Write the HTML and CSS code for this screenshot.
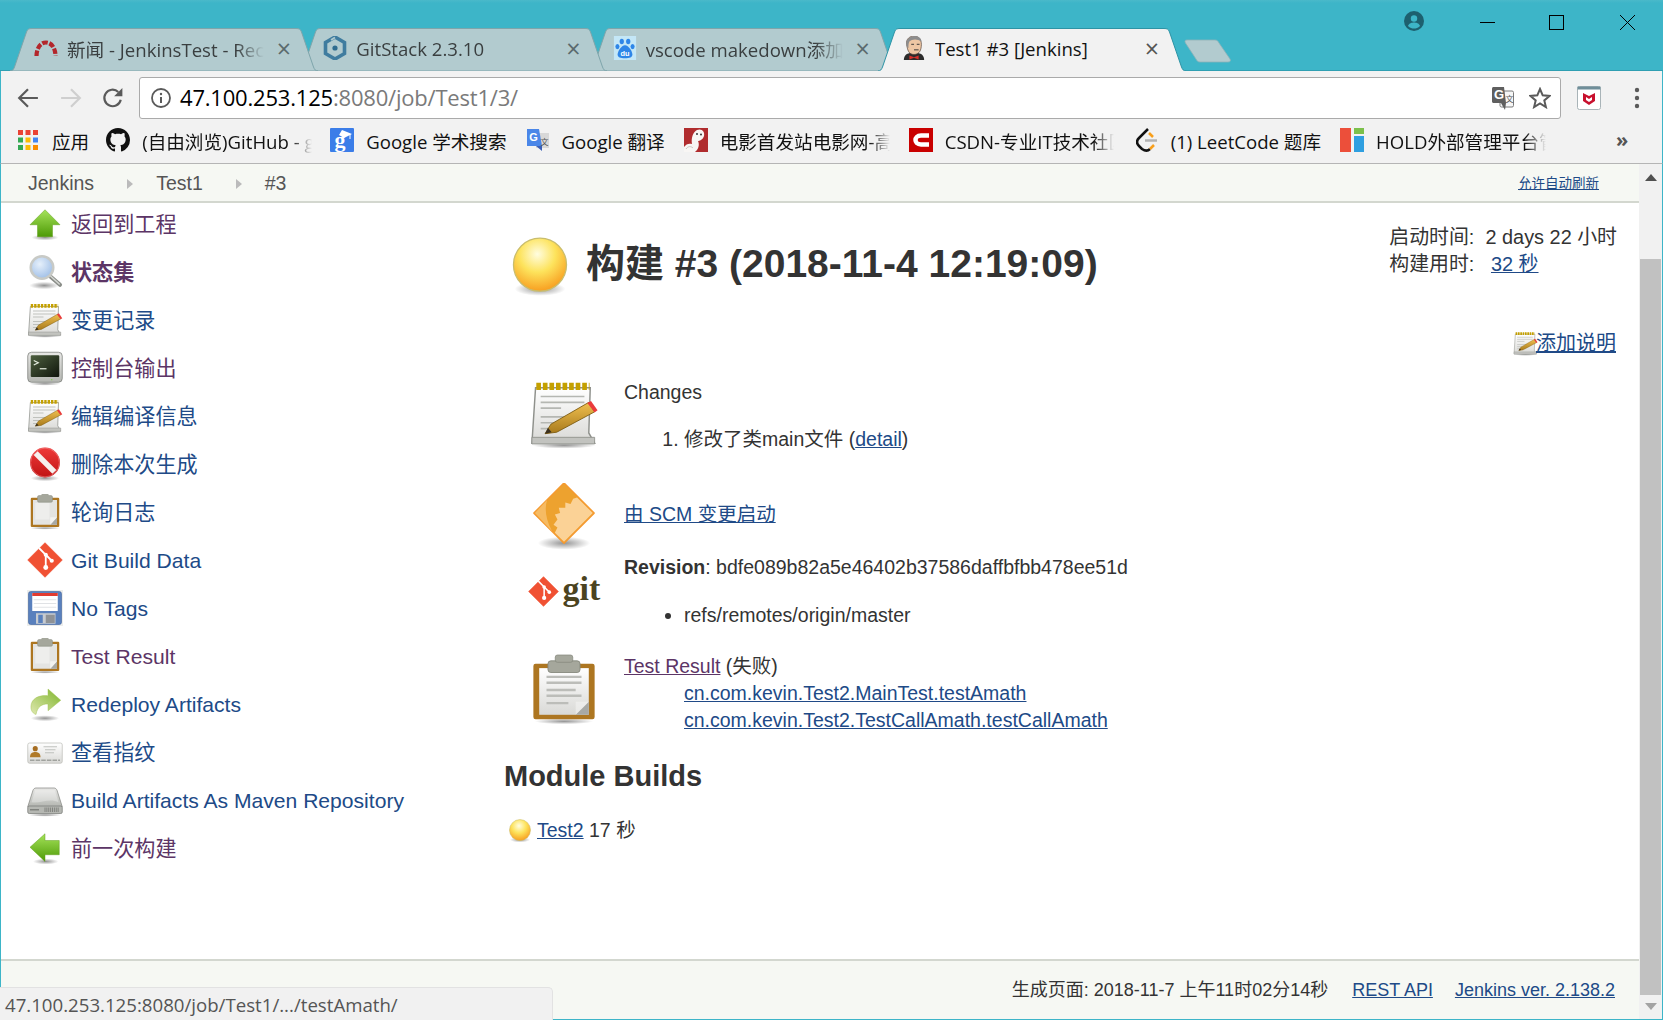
FILE: index.html
```html
<!DOCTYPE html>
<html lang="zh-CN">
<head>
<meta charset="utf-8">
<title>Test1 #3 [Jenkins]</title>
<link rel="stylesheet" href="styles.css">
</head>
<body>
<svg class="defs" width="0" height="0" aria-hidden="true">
<defs>
<linearGradient id="gGreen" x1="0" y1="0" x2="0" y2="1"><stop offset="0" stop-color="#a5e35a"/><stop offset="1" stop-color="#4e9a06"/></linearGradient>
<linearGradient id="gPaper" x1="0" y1="0" x2="0" y2="1"><stop offset="0" stop-color="#fff"/><stop offset="1" stop-color="#d9d9d6"/></linearGradient>
<linearGradient id="gPencil" x1="0" y1="0" x2="0" y2="1"><stop offset="0" stop-color="#f0c050"/><stop offset="1" stop-color="#a87a1c"/></linearGradient>
<linearGradient id="gGray" x1="0" y1="0" x2="0" y2="1"><stop offset="0" stop-color="#e8e8e6"/><stop offset="1" stop-color="#b4b6b1"/></linearGradient>
<linearGradient id="gTerm" x1="0" y1="0" x2="1" y2="1"><stop offset="0" stop-color="#4d5f3f"/><stop offset="1" stop-color="#10160c"/></linearGradient>
<linearGradient id="gRedeploy" x1="0" y1="1" x2="1" y2="0"><stop offset="0" stop-color="#dfe8b0"/><stop offset="1" stop-color="#7fb52c"/></linearGradient>
<radialGradient id="gBall" cx=".45" cy=".3" r=".68"><stop offset="0" stop-color="#fffde0"/><stop offset=".5" stop-color="#fde35c"/><stop offset="1" stop-color="#f8a324"/></radialGradient>
<radialGradient id="gShadow"><stop offset="0" stop-color="#000" stop-opacity=".42"/><stop offset="1" stop-color="#000" stop-opacity="0"/></radialGradient>
<radialGradient id="gLens" cx=".4" cy=".35" r=".7"><stop offset="0" stop-color="#e6f0fb"/><stop offset="1" stop-color="#9dbde6"/></radialGradient>
<linearGradient id="gRed" x1="0" y1="0" x2="0" y2="1"><stop offset="0" stop-color="#ef3a3a"/><stop offset="1" stop-color="#c01414"/></linearGradient>

<symbol id="i-up" viewBox="0 0 48 48"><ellipse cx="24" cy="42" rx="18" ry="4" fill="url(#gShadow)"/><path d="M24 5 44 25H34V41H14V25H4Z" fill="url(#gGreen)" stroke="#5a9a14" stroke-width=".6"/></symbol>
<symbol id="i-left" viewBox="0 0 48 48"><ellipse cx="25" cy="42" rx="17" ry="4" fill="url(#gShadow)"/><path d="M4 23 24 5V14H43V33H24V42Z" fill="url(#gGreen)" stroke="#5a9a14" stroke-width=".6"/></symbol>
<symbol id="i-mag" viewBox="0 0 48 48"><ellipse cx="23" cy="42" rx="20" ry="5" fill="url(#gShadow)"/><path d="M30 29 44 41" stroke="#8a8d88" stroke-width="5.500" stroke-linecap="round"/><path d="M31 29 43 40" stroke="#d4d6d2" stroke-width="2" stroke-linecap="round"/><circle cx="20" cy="18" r="15" fill="url(#gLens)" stroke="#c8cac6" stroke-width="3.400"/></symbol>
<symbol id="i-note" viewBox="0 0 48 48"><ellipse cx="24" cy="45.500" rx="22" ry="2.200" fill="url(#gShadow)"/><path d="M4.500 6H42L41 37 45 44H2Z" fill="url(#gPaper)" stroke="#8f918c" stroke-width="1"/><path d="M2 40H45V44.500H2Z" fill="#c2c3bf" stroke="#8f918c" stroke-width=".6"/><path d="M5 5H41.500" stroke="#c4a000" stroke-width="5" stroke-dasharray="3.200 1.300"/><path d="M8 12H38M8 16H38M8 20H22M8 26H28M8 30H22M8 34H18" stroke="#b5b7b2" stroke-width="1.100"/><path d="M11 37.500 15 31 41 16 45 22.500 19 36.500Z" fill="url(#gPencil)" stroke="#7c5a10" stroke-width=".6"/><path d="M40 16.500 42.500 15 47 21.500 45 23Z" fill="#ea3b3b"/><path d="M11 37.500 13 33.500 15.500 36.500Z" fill="#3a3020"/></symbol>
<symbol id="i-term" viewBox="0 0 48 48"><ellipse cx="24" cy="45" rx="21" ry="2.500" fill="url(#gShadow)"/><rect x="1" y="3" width="46" height="40" rx="5" fill="url(#gGray)" stroke="#7a7c78" stroke-width="1"/><rect x="5" y="7" width="38" height="29" rx="1.500" fill="url(#gTerm)"/><path d="M9 14 15 17 9 20" fill="none" stroke="#e6eee0" stroke-width="1.600"/><path d="M17 25H26" stroke="#e6eee0" stroke-width="1.600"/><circle cx="33" cy="39.500" r=".9" fill="#7ad13d"/></symbol>
<symbol id="i-no" viewBox="0 0 48 48"><ellipse cx="24" cy="43" rx="19" ry="4" fill="url(#gShadow)"/><circle cx="24" cy="22" r="20" fill="url(#gRed)"/><circle cx="24" cy="22" r="19.200" fill="none" stroke="#e88" stroke-width=".8"/><path d="M11.500 9.500 36.500 34.500" stroke="#f6f0ee" stroke-width="7.500"/></symbol>
<symbol id="i-clip" viewBox="0 0 48 48"><ellipse cx="24" cy="45.500" rx="20" ry="2" fill="url(#gShadow)"/><rect x="5" y="5" width="38" height="39" rx="1.500" fill="#ad7621"/><rect x="8" y="8" width="32" height="33" fill="#e4e4e2"/><path d="M11 12H30V34H11Z" fill="#eeeeec"/><path d="M31 41 40 31V41Z" fill="#a8a9a5"/><path d="M31 41V31H40Z" fill="#f3f3f1"/><rect x="14" y="2" width="20" height="9" rx="2" fill="#a5a79c" stroke="#85877c" stroke-width=".6"/><rect x="19" y="0" width="10" height="4" rx="1.500" fill="#a5a79c"/></symbol>
<symbol id="i-clipb" viewBox="0 0 48 48"><ellipse cx="24" cy="45.500" rx="20" ry="2" fill="url(#gShadow)"/><rect x="3" y="6" width="42" height="38" rx="1.500" fill="#ad7621"/><rect x="7" y="9" width="34" height="32" fill="url(#gPaper)"/><path d="M12 15H36M12 19H36M12 24H32M12 28H36M12 33H27" stroke="#bcbdb9" stroke-width="1.700"/><path d="M32 41 41 32V41Z" fill="#a8a9a5"/><path d="M32 41V32H41Z" fill="#f3f3f1" opacity=".6"/><rect x="13" y="4" width="22" height="8" rx="2" fill="#a5a79c" stroke="#85877c" stroke-width=".6"/><rect x="18" y="0" width="12" height="5" rx="1.500" fill="#a5a79c" stroke="#85877c" stroke-width=".5"/></symbol>
<symbol id="i-git" viewBox="0 0 48 48"><path d="M24 1 47 24 24 47 1 24Z" fill="#f05133" stroke="#f05133" stroke-width="1" stroke-linejoin="round"/><path d="M16 8 25 17V33M25 17 33 25" fill="none" stroke="#fff" stroke-width="2.400"/><circle cx="25" cy="17" r="2.800" fill="#fff"/><circle cx="25" cy="34" r="3.300" fill="#fff"/><circle cx="33" cy="25" r="2.800" fill="#fff"/></symbol>
<symbol id="i-floppy" viewBox="0 0 48 48"><rect x="0" y="0" width="48" height="48" fill="#ecedeb"/><rect x="2" y="2" width="44" height="44" rx="3" fill="#5980bd" stroke="#3c5f9b" stroke-width=".8"/><rect x="7" y="4" width="34" height="24" fill="#fff"/><rect x="7" y="4" width="34" height="4" fill="#e23b30"/><path d="M9 13H39M9 18H39M9 23H39" stroke="#d5d8dc" stroke-width="1"/><rect x="12" y="31" width="26" height="14" fill="#c7cbd0"/><rect x="15" y="33" width="6" height="11" fill="#5980bd"/><rect x="25" y="33" width="12" height="11" fill="#8f9296"/></symbol>
<symbol id="i-redeploy" viewBox="0 0 48 48"><ellipse cx="24" cy="43" rx="19" ry="4" fill="url(#gShadow)"/><path d="M28 4 45 19 28 33V24C20 24 14 27 12 38 6 36 4 30 6 23 9 15 18 12 28 13Z" fill="url(#gRedeploy)" stroke="#9fc04e" stroke-width=".6"/></symbol>
<symbol id="i-card" viewBox="0 0 48 48"><rect x="1" y="12" width="46" height="27" rx="2.500" fill="url(#gPaper)" stroke="#bdbfba" stroke-width="1"/><circle cx="11" cy="19.500" r="3.400" fill="#a66e22"/><path d="M4 31C4 25 8 24 11 24S18 25 18 31Z" fill="#b07a28"/><path d="M22 17H40M24 21H38M24 25H36" stroke="#b9bbb7" stroke-width="1.200"/><path d="M4 35H44" stroke="#a0a29e" stroke-width="2.200" stroke-dasharray="6 1.500"/></symbol>
<symbol id="i-disk" viewBox="0 0 48 48"><ellipse cx="24" cy="44" rx="22" ry="2.200" fill="url(#gShadow)"/><path d="M12 8H36C38 8 39 9 40 11L47 33H1L8 11C9 9 10 8 12 8Z" fill="url(#gGray)" stroke="#888a85" stroke-width="1"/><path d="M11 11H37L42 27C30 21 18 29 6 27Z" fill="#fff" opacity=".3"/><rect x="1" y="32" width="46" height="10" rx="2" fill="#b5b7b2" stroke="#7a7c78" stroke-width="1"/><path d="M24 34V40M26.500 34V40M29 34V40M31.500 34V40M34 34V40M36.500 34V40M39 34V40M41.500 34V40" stroke="#70726e" stroke-width="1"/><path d="M4 37H16" stroke="#80827e" stroke-width="2"/></symbol>
<symbol id="i-ball" viewBox="0 0 48 52"><ellipse cx="24" cy="45" rx="22" ry="6" fill="url(#gShadow)"/><circle cx="24" cy="24" r="23" fill="url(#gBall)" stroke="#c9bd6c" stroke-width="1.100"/></symbol>
<symbol id="i-scm" viewBox="0 0 48 52"><ellipse cx="24" cy="46" rx="20" ry="5" fill="url(#gShadow)"/><path d="M24 0 47 23 24 46 1 23Z" fill="#eda22f" stroke="#f59a30" stroke-width="1.200" stroke-linejoin="round"/><path d="M11 13C9 20 10 28 15 37L1.800 23Z" fill="#f6bb63"/><path d="M46 23 24 45 17 38 19 34 16 32 19 28 17 24 21 23 20 19 25 19 25 15 29 16 31 12 34 11Z" fill="#fbd296"/></symbol>
</defs>
</svg>

<div class="window">
  <header class="titlebar">
    <div class="tabs">
      <div class="tab tab-a">
        <svg class="tab-bg" viewBox="0 0 308 43" preserveAspectRatio="none"><path d="M0 43C2.500 43 3.500 41.500 4.500 39L16.500 4C17.500 1 19 .5 22 .5H286C289 .5 290.500 1 291.500 4L303.500 39C304.500 41.500 305.500 43 308 43Z" class="tab-shape"/></svg>
        <svg class="fav" viewBox="0 0 24 16"><path d="M2.500 16C2.500 9 6 2.500 12 2.500S21.500 9 21.500 16" fill="none" stroke="#b3262b" stroke-width="4.200" stroke-dasharray="5.500 1.700"/></svg>
        <span class="tab-title">新闻 - JenkinsTest - Rec</span><span class="tab-x">×</span>
      </div>
      <div class="tab tab-b">
        <svg class="tab-bg" viewBox="0 0 308 43" preserveAspectRatio="none"><path d="M0 43C2.500 43 3.500 41.500 4.500 39L16.500 4C17.500 1 19 .5 22 .5H286C289 .5 290.500 1 291.500 4L303.500 39C304.500 41.500 305.500 43 308 43Z" class="tab-shape"/></svg>
        <svg class="fav" viewBox="0 0 24 24"><path d="M12 1 21.500 6.500V17.500L12 23 2.500 17.500V6.500Z" fill="none" stroke="#3f7c9f" stroke-width="3.600"/><path d="M8 4 12 1.500" stroke="#aec9ce" stroke-width="2"/><circle cx="12" cy="12" r="2.600" fill="#2f6c8f"/></svg>
        <span class="tab-title">GitStack 2.3.10</span><span class="tab-x">×</span>
      </div>
      <div class="tab tab-c">
        <svg class="tab-bg" viewBox="0 0 308 43" preserveAspectRatio="none"><path d="M0 43C2.500 43 3.500 41.500 4.500 39L16.500 4C17.500 1 19 .5 22 .5H286C289 .5 290.500 1 291.500 4L303.500 39C304.500 41.500 305.500 43 308 43Z" class="tab-shape"/></svg>
        <svg class="fav" viewBox="0 0 24 26"><rect width="24" height="26" fill="#c4e7f7"/><g fill="#2e86e8"><ellipse cx="8.500" cy="6" rx="2.300" ry="3"/><ellipse cx="15.500" cy="6" rx="2.300" ry="3"/><ellipse cx="3.800" cy="11.500" rx="2.200" ry="2.800"/><ellipse cx="20.200" cy="11.500" rx="2.200" ry="2.800"/><path d="M12 10C8 10 4 17 4 20S7 24 12 24 20 23 20 20 16 10 12 10Z"/></g><text x="12" y="22" class="du">du</text></svg>
        <span class="tab-title">vscode makedown添加目录</span><span class="tab-x">×</span>
      </div>
      <div class="tab tab-d">
        <svg class="tab-bg" viewBox="0 0 308 43" preserveAspectRatio="none"><path d="M0 43C2.500 43 3.500 41.500 4.500 39L16.500 4C17.500 1 19 .5 22 .5H286C289 .5 290.500 1 291.500 4L303.500 39C304.500 41.500 305.500 43 308 43" class="tab-shape-active"/></svg>
        <svg class="fav" viewBox="0 0 24 26"><path d="M1 26C1 20 6 18 12 18S23 20 23 26Z" fill="#2c2c2c"/><path d="M4 9C3 3 8 0 12 0S20 3 20 9 18 20 12 20 5 15 4 9Z" fill="#eec7a4" stroke="#4a3a30" stroke-width=".7"/><path d="M4 11C2 4 8 0 12 0 18 0 20 3 20 6 16 3 10 3 7 6 6 8 6 10 6 13Z" fill="#8d8d8d"/><path d="M9 9H12M15 9H18M12 15H17" stroke="#333" stroke-width="1"/><path d="M7 21 12 23 17 21V25.500L12 23.500 7 25.500Z" fill="#d9302a"/></svg>
        <span class="tab-title tab-title-active">Test1 #3 [Jenkins]</span><span class="tab-x">×</span>
      </div>
      <svg class="newtab" viewBox="0 0 48 24"><path d="M3 1H31C33 1 34 2 35 4L46 20C47 22 46 23 44 23H16C14 23 13 22 12 20L1.500 4C.5 2 1 1 3 1Z" fill="#b2cbcf" stroke="#8fb3b8" stroke-width=".8"/></svg>
    </div>
    <div class="winctl">
      <svg class="user" viewBox="0 0 20 20"><circle cx="10" cy="10" r="10" fill="#1d606f"/><circle cx="10" cy="7.500" r="3.200" fill="#3db5c8"/><path d="M4 15C5 12 8 11.500 10 11.500S15 12 16 15C14 17 12 17.500 10 17.500S6 17 4 15Z" fill="#3db5c8"/></svg>
      <svg class="wc wc-min" viewBox="0 0 15 15"><path d="M0 7.500H15" stroke="#000" stroke-width="1"/></svg>
      <svg class="wc wc-max" viewBox="0 0 15 15"><rect x=".5" y=".5" width="14" height="14" fill="none" stroke="#000"/></svg>
      <svg class="wc wc-close" viewBox="0 0 15 15"><path d="M0 0 15 15M15 0 0 15" stroke="#000" stroke-width="1"/></svg>
    </div>
  </header>

  <div class="toolbar">
    <svg class="tb tb-back" viewBox="0 0 20 20"><path d="M19 10H3M10 2 2 10 10 18" fill="none" stroke="#5a5a5a" stroke-width="2"/></svg>
    <svg class="tb tb-fwd" viewBox="0 0 20 20"><path d="M1 10H17M10 2 18 10 10 18" fill="none" stroke="#cfcfcf" stroke-width="2"/></svg>
    <svg class="tb tb-reload" viewBox="0 0 20 20"><path d="M17 11.500A7.500 7.500 0 1 1 14.800 4.500" fill="none" stroke="#5a5a5a" stroke-width="2"/><path d="M18.500 1V8.500H11Z" fill="#5a5a5a"/></svg>
    <div class="omnibox">
      <svg class="omni-info" viewBox="0 0 20 20"><circle cx="10" cy="10" r="9" fill="none" stroke="#5a5a5a" stroke-width="1.800"/><path d="M10 9V15" stroke="#5a5a5a" stroke-width="2"/><circle cx="10" cy="6" r="1.200" fill="#5a5a5a"/></svg>
      <span class="url"><b class="url-host">47.100.253.125</b>:8080/job/Test1/3/</span>
      <svg class="omni-tr" viewBox="0 0 22 24"><rect x="8" y="5" width="13.500" height="16" rx="1.500" fill="#f6f6f6" stroke="#7a7a7a"/><path d="M1.500 1H12L14 17H1.500C.7 17 0 16.300 0 15.500V2.500C0 1.700.7 1 1.500 1Z" fill="#5f5f5f"/><path d="M9 17 13 24 14 17Z" fill="#5f5f5f"/><text x="7" y="13" class="tr-g">G</text><text x="17.500" y="16" class="tr-z">文</text></svg>
      <svg class="omni-star" viewBox="0 0 22 22"><path d="M11 2 13.700 8.300 20.500 8.900 15.300 13.400 16.900 20.100 11 16.500 5.100 20.100 6.700 13.400 1.500 8.900 8.300 8.300Z" fill="none" stroke="#5a5a5a" stroke-width="2"/></svg>
    </div>
    <svg class="ext" viewBox="0 0 24 24"><rect x=".5" y=".5" width="23" height="23" rx="2" fill="#fff" stroke="#a9b4b8"/><rect x=".5" y=".5" width="23" height="3" fill="#6f8e99"/><path d="M6 7 12 10 18 7V15L12 19 6 15ZM9 11V14L12 16 15 14V11L12 13Z" fill="#c8102e" fill-rule="evenodd"/></svg>
    <svg class="dots" viewBox="0 0 6 22"><circle cx="3" cy="3" r="2.200" fill="#5a5a5a"/><circle cx="3" cy="11" r="2.200" fill="#5a5a5a"/><circle cx="3" cy="19" r="2.200" fill="#5a5a5a"/></svg>
  </div>

  <nav class="bookmarks">
    <a class="bm bm-apps">
      <svg class="bm-ico bm-grid" viewBox="0 0 20 20"><g fill="#ea4335"><rect width="5" height="5"/><rect x="7.500" width="5" height="5"/><rect x="15" width="5" height="5"/></g><rect y="7.500" width="5" height="5" fill="#34a853"/><rect x="7.500" y="7.500" width="5" height="5" fill="#fbbc05"/><rect x="15" y="7.500" width="5" height="5" fill="#4285f4"/><rect y="15" width="5" height="5" fill="#34a853"/><rect x="7.500" y="15" width="5" height="5" fill="#fbbc05"/><rect x="15" y="15" width="5" height="5" fill="#fb8c00"/></svg>
      <span class="bm-t">应用</span>
    </a>
    <a class="bm bm-gh">
      <svg class="bm-ico" viewBox="0 0 16 16"><path d="M8 0C3.580 0 0 3.580 0 8c0 3.540 2.290 6.530 5.470 7.590.4.070.55-.17.55-.38 0-.19-.01-.82-.01-1.490-2.010.37-2.530-.49-2.690-.94-.09-.23-.48-.94-.82-1.130-.28-.15-.68-.52-.01-.53.63-.01 1.080.58 1.230.82.72 1.210 1.870.87 2.330.66.07-.52.28-.87.51-1.070-1.780-.2-3.640-.89-3.640-3.950 0-.87.31-1.590.82-2.150-.08-.2-.36-1.020.08-2.120 0 0 .67-.21 2.200.82.64-.18 1.320-.27 2-.27.68 0 1.360.09 2 .27 1.530-1.040 2.200-.82 2.200-.82.44 1.100.16 1.920.08 2.120.51.56.82 1.270.82 2.150 0 3.070-1.870 3.750-3.650 3.950.29.25.54.73.54 1.480 0 1.070-.01 1.930-.01 2.200 0 .21.15.46.55.38A8.013 8.013 0 0016 8c0-4.420-3.580-8-8-8z" fill="#111"/></svg>
      <span class="bm-t bm-fade w-gh">(自由浏览)GitHub - g</span>
    </a>
    <a class="bm bm-gs">
      <svg class="bm-ico" viewBox="0 0 24 24"><rect width="24" height="24" rx="1" fill="#3b7de8"/><text x="10" y="19" class="gs-g">g</text><path d="M12 2 22 6 14 10 9 7Z" fill="#fff"/><path d="M20 6V11" stroke="#fff"/></svg>
      <span class="bm-t">Google 学术搜索</span>
    </a>
    <a class="bm bm-gt">
      <svg class="bm-ico" viewBox="0 0 24 24"><rect x="10" y="5" width="13" height="15" fill="#d8d8d8"/><path d="M1 1H13L16 18H1Z" fill="#4a86e8"/><path d="M10 18 16 23 16 18Z" fill="#3a5fb8"/><text x="7.500" y="13" class="gt-g">G</text><text x="18.500" y="17" class="gt-z">文</text></svg>
      <span class="bm-t">Google 翻译</span>
    </a>
    <a class="bm bm-mv">
      <svg class="bm-ico" viewBox="0 0 24 24"><rect width="24" height="24" fill="#b02c2e"/><path d="M0 24V19C2 16 5 15 8 16 7 10 9 4 13 2 18 0 21 4 20 8 19 12 15 13 14 13 16 17 14 22 11 24Z" fill="#f8f6f4"/><path d="M2 21C4 18 7 18 9 20" fill="none" stroke="#c9c4c0"/><circle cx="13" cy="6" r=".9" fill="#222"/><circle cx="17" cy="6.500" r=".9" fill="#222"/></svg>
      <span class="bm-t bm-fade w-mv">电影首发站电影网-高清</span>
    </a>
    <a class="bm bm-cs">
      <svg class="bm-ico" viewBox="0 0 24 24"><rect width="24" height="24" fill="#c90000"/><path d="M20 7.500H12C8 7.500 6.500 10 6.500 12S8 16.500 12 16.500H20" fill="none" stroke="#fff" stroke-width="4.500"/></svg>
      <span class="bm-t bm-fade w-cs">CSDN-专业IT技术社区</span>
    </a>
    <a class="bm bm-lc">
      <svg class="bm-ico bm-lc-ico" viewBox="0 0 22 24"><path d="M12 1 3 10C0 13 1 16 3 18L6 21C9 23 12 23 14 21" fill="none" stroke="#111" stroke-width="2.500"/><path d="M13 5 17 9M14 21 18 17" fill="none" stroke="#f89f1b" stroke-width="2.500"/><path d="M9 12.500H21" stroke="#b3b3b3" stroke-width="2.500"/></svg>
      <span class="bm-t">(1) LeetCode 题库</span>
    </a>
    <a class="bm bm-hd">
      <svg class="bm-ico" viewBox="0 0 24 24"><rect width="11" height="24" fill="#ec4f3a"/><rect x="14" width="10" height="6" fill="#7cc04b"/><rect x="14" y="8" width="10" height="16" fill="#2f9fe0"/></svg>
      <span class="bm-t bm-fade w-hd">HOLD外部管理平台管理</span>
    </a>
    <span class="bm-more">»</span>
  </nav>

  <div class="viewport">
    <div class="page">
      <div class="crumbs">
        <a class="crumb">Jenkins</a><span class="crumb-arrow"></span>
        <a class="crumb">Test1</a><span class="crumb-arrow"></span>
        <a class="crumb">#3</a>
        <a class="autorefresh">允许自动刷新</a>
      </div>
      <div class="body">
        <aside class="side">
          <a class="task visited"><svg class="task-ico"><use href="#i-up"/></svg>返回到工程</a>
          <a class="task visited current"><svg class="task-ico"><use href="#i-mag"/></svg>状态集</a>
          <a class="task"><svg class="task-ico"><use href="#i-note"/></svg>变更记录</a>
          <a class="task visited"><svg class="task-ico"><use href="#i-term"/></svg>控制台输出</a>
          <a class="task"><svg class="task-ico"><use href="#i-note"/></svg>编辑编译信息</a>
          <a class="task"><svg class="task-ico"><use href="#i-no"/></svg>删除本次生成</a>
          <a class="task"><svg class="task-ico"><use href="#i-clip"/></svg>轮询日志</a>
          <a class="task"><svg class="task-ico"><use href="#i-git"/></svg>Git Build Data</a>
          <a class="task"><svg class="task-ico"><use href="#i-floppy"/></svg>No Tags</a>
          <a class="task visited"><svg class="task-ico"><use href="#i-clip"/></svg>Test Result</a>
          <a class="task"><svg class="task-ico"><use href="#i-redeploy"/></svg>Redeploy Artifacts</a>
          <a class="task"><svg class="task-ico"><use href="#i-card"/></svg>查看指纹</a>
          <a class="task"><svg class="task-ico"><use href="#i-disk"/></svg>Build Artifacts As Maven Repository</a>
          <a class="task visited"><svg class="task-ico"><use href="#i-left"/></svg>前一次构建</a>
        </aside>
        <main class="main">
          <div class="head">
            <h1 class="title"><svg class="title-ball"><use href="#i-ball"/></svg>构建 #3 (2018-11-4 12:19:09)</h1>
            <div class="caption">
              <div>启动时间:&nbsp; 2 days 22 小时</div>
              <div>构建用时:&nbsp; &nbsp;<a class="link">32 秒</a></div>
            </div>
          </div>
          <div class="desc"><svg class="desc-ico"><use href="#i-note"/></svg><a class="link">添加说明</a></div>

          <section class="row row-changes">
            <svg class="row-ico ico-note"><use href="#i-note"/></svg>
            <div>
              <div>Changes</div>
              <ol class="list"><li>修改了类main文件 (<a class="link">detail</a>)</li></ol>
            </div>
          </section>
          <section class="row row-scm">
            <svg class="row-ico ico-scm"><use href="#i-scm"/></svg>
            <div><a class="link">由 SCM 变更启动</a></div>
          </section>
          <section class="row row-git">
            <div class="gitlogo"><svg class="gitlogo-ico"><use href="#i-git"/></svg><span class="gitlogo-t">git</span></div>
            <div>
              <div><b>Revision</b>: bdfe089b82a5e46402b37586daffbfbb478ee51d</div>
              <ul class="list list-refs"><li>refs/remotes/origin/master</li></ul>
            </div>
          </section>
          <section class="row row-test">
            <svg class="row-ico ico-clip"><use href="#i-clipb"/></svg>
            <div>
              <div><a class="link link-v">Test Result</a> (失败)</div>
              <div class="fails"><a class="link">cn.com.kevin.Test2.MainTest.testAmath</a></div>
              <div class="fails"><a class="link">cn.com.kevin.Test2.TestCallAmath.testCallAmath</a></div>
            </div>
          </section>
          <h2 class="h2">Module Builds</h2>
          <div class="module"><svg class="module-ball"><use href="#i-ball"/></svg><a class="link">Test2</a> 17 秒</div>
        </main>
      </div>
      <footer class="foot">
        <span class="foot-gen">生成页面: 2018-11-7 上午11时02分14秒</span>
        <a class="link">REST API</a>
        <a class="link">Jenkins ver. 2.138.2</a>
      </footer>
    </div>
    <div class="scrollbar">
      <span class="sb-up"></span>
      <span class="sb-thumb"></span>
      <span class="sb-down"></span>
    </div>
    <div class="status">47.100.253.125:8080/job/Test1/.../testAmath/</div>
  </div>
</div>
</body>
</html>
```
FILE: styles.css
```css
* { box-sizing: border-box; }
html, body { margin: 0; padding: 0; height: 100%; overflow: hidden; }
body { background: #3db5c8; font-family: "Liberation Sans", "Noto Sans CJK SC", sans-serif; }
.defs { position: absolute; }
a { text-decoration: none; color: inherit; }

.window { width: 1663px; height: 1020px; display: flex; flex-direction: column; background: #3db5c8; position: relative; overflow: hidden; }

/* title bar & tabs */
.titlebar { height: 71px; flex: none; display: flex; justify-content: space-between; background: linear-gradient(#4ab9ca 0, #3db5c8 3px); border-bottom: 1px solid #2f9fb2; }
.tabs { display: flex; align-items: flex-start; padding: 28px 0 0 10px; }
.tab { position: relative; width: 308px; height: 43px; margin-right: -18.7px; display: flex; align-items: center; padding: 0 24px 3px 24px; font-family: "Open Sans", "Noto Sans CJK SC", sans-serif; font-size: 18.600px; color: #3a3f40; flex: none; }
.tab-a { z-index: 4; } .tab-b { z-index: 3; } .tab-c { z-index: 2; } .tab-d { z-index: 5; }
.tab-bg { position: absolute; left: 0; top: 0; width: 100%; height: 100%; }
.tab-shape { fill: #b2cbcf; stroke: #7ea5ab; stroke-width: 1; }
.tab-shape-active { fill: #f2f2f2; stroke: #2d93a5; stroke-width: 1; }
.fav { position: relative; width: 24px; height: 24px; flex: none; }
.tab-title { position: relative; flex: 1; min-width: 0; margin-left: 9px; white-space: nowrap; overflow: hidden; -webkit-mask-image: linear-gradient(90deg, #000 86%, transparent 100%); mask-image: linear-gradient(90deg, #000 86%, transparent 100%); }
.tab-title-active { color: #111; -webkit-mask-image: none; mask-image: none; }
.tab-x { position: relative; width: 20px; text-align: center; font-size: 25px; line-height: 20px; color: #5a6a6d; margin-left: 10px; flex: none; }
.tab-d .tab-x { color: #555; }
.newtab { width: 48px; height: 24px; margin: 11px 0 0 17px; flex: none; position: relative; z-index: 1; }
.du { font: bold 8px "Liberation Sans", sans-serif; fill: #fff; text-anchor: middle; }

.winctl { display: flex; align-items: flex-start; padding: 11px 0 0 0; }
.user { width: 20px; height: 20px; margin-right: 56px; flex: none; }
.wc { width: 15px; height: 15px; flex: none; margin-top: 4px; }
.wc-min { margin-right: 54px; }
.wc-max { margin-right: 56px; }
.wc-close { margin-right: 28px; }

/* toolbar */
.toolbar { height: 48px; flex: none; background: #f2f2f2; display: flex; align-items: center; padding: 5px 0 0 0; border-left: 1px solid #3db5c8; border-right: 1px solid #3db5c8; }
.tb { width: 22px; height: 22px; flex: none; }
.tb-back { margin-left: 16px; }
.tb-fwd { margin-left: 21px; }
.tb-reload { margin-left: 20px; }
.omnibox { margin-left: 15px; width: 1422px; height: 42px; background: #fff; border: 1px solid #aaa; border-radius: 3px; display: flex; align-items: center; padding: 0 9px 0 11px; flex: none; }
.omni-info { width: 20px; height: 20px; flex: none; }
.url { margin-left: 9px; flex: 1; font-family: "Open Sans", sans-serif; font-size: 22px; color: #7a7a7a; letter-spacing: -.2px; white-space: nowrap; position: relative; top: -1px; }
.url-host { font-weight: 400; color: #000; }
.omni-tr { width: 22px; height: 24px; flex: none; margin-right: 15px; }
.tr-g { font: bold 13px "Liberation Sans", sans-serif; fill: #fff; text-anchor: middle; }
.tr-z { font: 8px "Noto Sans CJK SC", sans-serif; fill: #555; text-anchor: middle; }
.omni-star { width: 22px; height: 22px; flex: none; }
.ext { width: 24px; height: 24px; margin-left: 16px; flex: none; }
.dots { width: 6px; height: 22px; margin-left: 33px; flex: none; }

/* bookmarks */
.bookmarks { height: 45px; flex: none; background: #f2f2f2; border-bottom: 1px solid #b5b5b5; border-left: 1px solid #3db5c8; border-right: 1px solid #3db5c8; padding-bottom: 2px; display: flex; align-items: center; font-family: "Open Sans", "Noto Sans CJK SC", sans-serif; font-size: 18.600px; color: #111; white-space: nowrap; position: relative; }
.bm { display: flex; align-items: center; flex: none; }
.bm-ico { width: 24px; height: 24px; flex: none; }
.bm-t { margin-left: 12px; }
.bm-fade { overflow: hidden; -webkit-mask-image: linear-gradient(90deg, #000 88%, transparent 100%); mask-image: linear-gradient(90deg, #000 88%, transparent 100%); }
.bm-apps { margin-left: 17px; }
.bm-grid { width: 20px; height: 20px; }
.bm-apps .bm-t { margin-left: 14px; }
.bm-gh { margin-left: 17px; }
.w-gh { width: 170px; }
.bm-gs { margin-left: 18px; }
.bm-gt { margin-left: 19px; }
.bm-gt .bm-t { margin-left: 12px; }
.bm-mv { margin-left: 19px; }
.w-mv { width: 170px; }
.bm-cs { margin-left: 19px; }
.w-cs { width: 169px; }
.bm-lc { margin-left: 22px; }
.bm-lc-ico { width: 22px; }
.bm-lc .bm-t { margin-left: 13px; }
.bm-hd { margin-left: 19px; }
.w-hd { width: 170px; }
.bm-more { margin-left: 70px; font-size: 20px; color: #555; font-weight: 700; line-height: 1; }
.gs-g { font: bold 22px "Liberation Serif", serif; fill: #fff; text-anchor: middle; }
.gt-g { font: bold 11px "Liberation Sans", sans-serif; fill: #fff; text-anchor: middle; }
.gt-z { font: 8px "Noto Sans CJK SC", sans-serif; fill: #555; text-anchor: middle; }

/* page */
.viewport { flex: 1; min-height: 0; display: flex; border-left: 1px solid #3db5c8; border-right: 1px solid #3db5c8; border-bottom: 1px solid #3db5c8; position: relative; background: #fff; }
.page { flex: 1; min-width: 0; display: flex; flex-direction: column; color: #333; font-size: 19.500px; line-height: 27px; }

.crumbs { height: 39px; flex: none; background: #f6f8f3; border-bottom: 2px solid #d3d7cf; display: flex; align-items: center; padding: 2px 40px 0 27px; color: #555; font-size: 19.500px; }
.crumb-arrow { width: 0; height: 0; border-left: 6px solid #bbb; border-top: 5.500px solid transparent; border-bottom: 5.500px solid transparent; margin: 0 23px 0 33px; }
.autorefresh { margin-left: auto; font-size: 13.500px; color: #204a87; text-decoration: underline; }

.body { flex: 1; min-height: 0; display: flex; background: #fff; }
.side { width: 503px; flex: none; margin-top: -3px; font-size: 21.100px; color: #204a87; }
.task { height: 48px; display: flex; align-items: center; padding-left: 26px; white-space: nowrap; }
.task.visited { color: #5c3566; }
.task.current { font-weight: 700; }
.task-ico { width: 36px; height: 36px; margin-right: 8px; flex: none; }

.main { flex: 1; min-width: 0; padding-right: 22px; }
.head { display: flex; justify-content: space-between; align-items: flex-start; height: 114px; }
.title { margin: 0; display: flex; align-items: center; font-size: 39px; line-height: 60px; font-weight: 700; color: #333; padding: 27px 0 0 8px; white-space: nowrap; }
.title-ball { width: 56px; height: 60px; margin-right: 18px; margin-top: 7px; flex: none; }
.caption { padding-top: 21px; white-space: nowrap; font-size: 19.900px; }
.desc { display: flex; justify-content: flex-end; align-items: center; height: 27px; margin-top: 13px; padding-right: 1px; font-size: 20px; }
.desc-ico { width: 25px; height: 25px; margin-right: -2px; }
.link { color: #204a87; text-decoration: underline; }
.link-v { color: #5c3566; }

.row { display: grid; grid-template-columns: 120px 1fr; }
.row-ico { justify-self: center; }
.ico-note { width: 70px; height: 70px; }
.ico-scm { width: 66px; height: 68px; align-self: center; margin-top: 5px; }
.ico-clip { width: 70px; height: 74px; }
.list { margin: 20px 0 0; padding: 0 0 0 60px; }
.list-refs { margin-top: 21px; }
.row-changes { margin-top: 22px; height: 95px; }
.row-scm { height: 80px; align-items: center; }
.row-git { height: 99px; }
.gitlogo { display: flex; align-items: center; justify-content: center; height: 32px; margin-top: 21px; }
.gitlogo-ico { width: 31px; height: 31px; flex: none; }
.gitlogo-t { font-family: "Liberation Serif", serif; font-weight: 700; font-size: 34px; line-height: 32px; color: #4b4320; margin-left: 4px; position: relative; top: -2px; }
.fails { padding-left: 60px; }
.row-test { height: 81px; }
.h2 { margin: 24px 0 0; font-size: 29px; line-height: 36px; font-weight: 700; color: #333; }
.module { display: flex; align-items: center; margin-top: 23px; padding-left: 5px; white-space: pre; height: 27px; }
.module-ball { width: 22px; height: 24px; margin-right: 6px; }

.foot { height: 60px; flex: none; background: #f6f8f3; border-top: 2px solid #d3d7cf; display: flex; justify-content: flex-end; align-items: center; gap: 22px; padding-right: 24px; font-size: 18px; }
.foot-gen { margin-right: 2px; }

.scrollbar { width: 23px; flex: none; background: #f1f1f1; display: flex; flex-direction: column; align-items: center; padding-top: 10px; }
.sb-up, .sb-down { width: 0; height: 0; border-left: 6px solid transparent; border-right: 6px solid transparent; }
.sb-up { border-bottom: 7px solid #505050; }
.sb-thumb { width: 21px; height: 736px; background: #c1c1c1; margin-top: 78px; }
.sb-down { border-top: 7px solid #a3a3a3; margin-top: 8px; }

.status { position: absolute; left: -1px; bottom: -1px; width: 553px; height: 33px; background: #f1f1f1; border: 1px solid #e2e2e2; border-left: 0; border-bottom: 0; border-top-right-radius: 5px; padding-left: 5px; font-family: "Open Sans", "Noto Sans CJK SC", sans-serif; font-size: 18.650px; line-height: 33px; color: #555; white-space: nowrap; }
```
